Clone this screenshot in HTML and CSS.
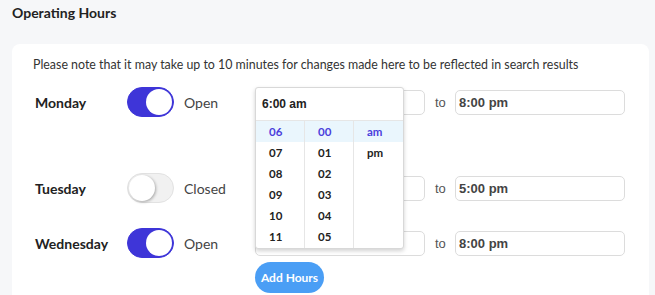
FILE: index.html
```html
<!DOCTYPE html>
<html lang="en">
<head>
    <meta charset="UTF-8">
    <meta name="viewport" content="width=device-width, initial-scale=1.0">
    <title>Operating Hours</title>
    <link rel="stylesheet" href="styles.css">
</head>
<body>

<h2 class="page-title">Operating Hours</h2>

<div class="card">
    <p class="note">Please note that it may take up to 10 minutes for changes made here to be reflected in search results</p>

    <div class="day-row day-row--first">
        <span class="day-name">Monday</span>
        <span class="switch switch--on"><span class="knob"></span></span>
        <span class="status">Open</span>
        <div class="time-field">
            <input type="text" class="time-input" value="">
            <div class="time-picker">
                <div class="picker-head">6:00 am</div>
                <div class="picker-cols">
                    <ul class="picker-col">
                        <li class="active">06</li>
                        <li>07</li>
                        <li>08</li>
                        <li>09</li>
                        <li>10</li>
                        <li>11</li>
                    </ul>
                    <ul class="picker-col">
                        <li class="active">00</li>
                        <li>01</li>
                        <li>02</li>
                        <li>03</li>
                        <li>04</li>
                        <li>05</li>
                    </ul>
                    <ul class="picker-col">
                        <li class="active">am</li>
                        <li>pm</li>
                    </ul>
                </div>
            </div>
        </div>
        <span class="to">to</span>
        <input type="text" class="time-input" value="8:00 pm">
    </div>

    <div class="day-row">
        <span class="day-name">Tuesday</span>
        <span class="switch"><span class="knob"></span></span>
        <span class="status">Closed</span>
        <input type="text" class="time-input" value="">
        <span class="to">to</span>
        <input type="text" class="time-input" value="5:00 pm">
    </div>

    <div class="day-row">
        <span class="day-name">Wednesday</span>
        <span class="switch switch--on"><span class="knob"></span></span>
        <span class="status">Open</span>
        <input type="text" class="time-input" value="">
        <span class="to">to</span>
        <input type="text" class="time-input" value="8:00 pm">
    </div>

    <div class="actions">
        <button class="add-hours">Add Hours</button>
    </div>
</div>

</body>
</html>
```

FILE: styles.css
```css
body {
    margin: 0;
    background-color: #f6f7f9;
    font-family: 'Lato', 'Liberation Sans', sans-serif;
    color: #222;
}

.page-title {
    margin: 0;
    padding: 3px 12px 0;
    height: 41px;
    font-size: 14px;
    font-weight: 700;
    line-height: 19px;
    color: #222;
}

.card {
    margin-left: 12px;
    width: 637px;
    background-color: #ffffff;
    border-radius: 8px 8px 0 0;
    padding: 12px 0 2px 21px;
    box-sizing: border-box;
}

.note {
    margin: 0;
    font-size: 12.4px;
    line-height: 18px;
    color: #333;
}

.day-row {
    display: grid;
    grid-template-columns: 92px 47px 81px 170px 30px 170px;
    align-items: center;
    height: 30px;
    margin-top: 25px;
    padding-left: 2px;
}

.day-row--first {
    margin-top: 13px;
    margin-bottom: 56px;
}

.day-name {
    font-size: 14px;
    font-weight: 700;
    color: #222;
}

.switch {
    position: relative;
    width: 47px;
    height: 30px;
    border-radius: 15px;
    background-color: #f1f1f1;
    border: 1px solid #e2e2e2;
    box-sizing: border-box;
}

.switch .knob {
    position: absolute;
    top: 1px;
    left: 1px;
    width: 26px;
    height: 26px;
    border-radius: 50%;
    background-color: #fff;
    box-shadow: 1px 1px 3px rgba(0, 0, 0, 0.3);
}

.switch--on {
    background-color: #3e35d8;
    border-color: #3e35d8;
}

.switch--on .knob {
    left: auto;
    right: 1px;
    box-shadow: none;
}

.status {
    padding-left: 10px;
    font-size: 14px;
    color: #444;
}

.time-field {
    position: relative;
}

.time-input {
    width: 170px;
    height: 25px;
    padding: 0 3px;
    border: 1px solid #dcdcdc;
    border-radius: 5px;
    box-sizing: border-box;
    font-family: 'Liberation Sans', Arial, sans-serif;
    font-size: 13px;
    font-weight: 700;
    color: #444;
    display: block;
}

.to {
    padding-left: 10px;
    font-family: 'Liberation Sans', Arial, sans-serif;
    font-size: 13px;
    color: #555;
}

.time-picker {
    position: absolute;
    top: -3px;
    left: 0;
    width: 149px;
    background-color: #fff;
    border: 1px solid #d8d8d8;
    border-radius: 3px;
    box-shadow: 0 2px 4px rgba(0, 0, 0, 0.18);
    box-sizing: border-box;
    z-index: 5;
}

.picker-head {
    height: 32px;
    line-height: 32px;
    padding-left: 6px;
    border-bottom: 1px solid #e6e6e6;
    font-family: 'Liberation Sans', Arial, sans-serif;
    font-size: 12px;
    font-weight: 700;
    color: #222;
}

.picker-cols {
    display: grid;
    grid-template-columns: 48px 49px 1fr;
}

.picker-col {
    list-style: none;
    margin: 0;
    padding: 0 0 1px;
    height: 126px;
}

.picker-col + .picker-col {
    border-left: 1px solid #e6e6e6;
}

.picker-col li {
    height: 21px;
    line-height: 21px;
    padding-left: 13px;
    font-size: 11.5px;
    font-weight: 700;
    color: #222;
}

.picker-col li.active {
    background-color: #eaf6fd;
    color: #4a3fdc;
}

.actions {
    padding-left: 222px;
    margin-top: 4px;
}

.add-hours {
    width: 69px;
    height: 31px;
    border: none;
    border-radius: 16px;
    background-color: #4a9ef5;
    color: #fff;
    font-family: 'Lato', 'Liberation Sans', sans-serif;
    font-size: 12px;
    font-weight: 700;
    padding: 0;
    cursor: pointer;
}
```
